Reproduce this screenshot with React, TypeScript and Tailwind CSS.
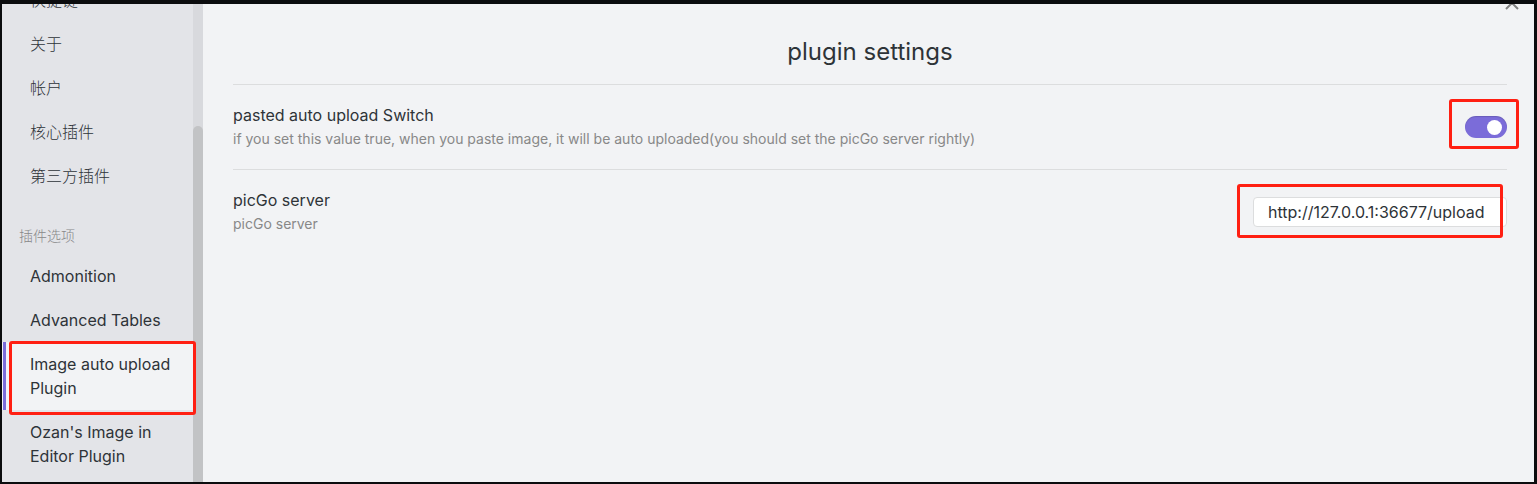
import { useState } from "react";

const coreItems = ["快捷键", "关于", "帐户", "核心插件", "第三方插件"];
const pluginItems = [
  "Admonition",
  "Advanced Tables",
  "Image auto upload Plugin",
  "Ozan's Image in Editor Plugin",
];

function Highlight({ className }: { className: string }) {
  return (
    <span
      aria-hidden="true"
      className={`pointer-events-none absolute z-10 rounded-[3px] border-3 border-[#ff1f12] ${className}`}
    />
  );
}

function NavItem({
  label,
  active,
  onSelect,
}: {
  label: string;
  active: boolean;
  onSelect: () => void;
}) {
  return (
    <li className="relative">
      <button
        type="button"
        onClick={onSelect}
        aria-current={active ? "page" : undefined}
        className={`block w-full py-2.5 pr-4 pl-7 text-left text-base leading-6 ${
          active ? "bg-[#f2f3f5]" : ""
        }`}
      >
        {label}
      </button>
      {active && (
        <>
          <span className="absolute inset-y-0 left-px w-[3px] bg-[#7b6cd9]" />
          <Highlight className="-top-px -right-[3px] -bottom-[5px] left-[7px]" />
        </>
      )}
    </li>
  );
}

export default function App() {
  const [selected, setSelected] = useState("Image auto upload Plugin");
  const [enabled, setEnabled] = useState(true);
  const [server, setServer] = useState("http://127.0.0.1:36677/upload");

  return (
    <div className="relative flex h-screen overflow-hidden border-t-4 border-r-3 border-b-2 border-l-2 border-[#0b0c0e] bg-[#f2f3f5] font-['Inter','Noto_Sans_CJK_SC',sans-serif] text-[#2e3338]">
      <aside className="flex w-[201px] shrink-0 bg-[#e3e4e8]">
        <nav className="-mt-[26px] min-w-0 flex-1">
          <ul className="font-light">
            {coreItems.map((item) => (
              <NavItem
                key={item}
                label={item}
                active={item === selected}
                onSelect={() => setSelected(item)}
              />
            ))}
          </ul>
          <h3 className="pt-7 pr-4 pb-2 pl-[17px] text-sm leading-5 font-light text-[#888888]">
            插件选项
          </h3>
          <ul>
            {pluginItems.map((item) => (
              <NavItem
                key={item}
                label={item}
                active={item === selected}
                onSelect={() => setSelected(item)}
              />
            ))}
          </ul>
        </nav>
        <div className="flex w-2.5 flex-col bg-[#d8d9dd] pt-[122px]">
          <div className="flex-1 rounded-t-full bg-[#c2c3c5]" />
        </div>
      </aside>

      <main className="min-w-0 flex-1 pt-7 pr-[27px] pl-[30px]">
        <h2 className="pb-3 text-center text-2xl leading-10">plugin settings</h2>

        <section className="flex items-center border-t border-[#dcddde] py-[18px]">
          <div className="min-w-0 flex-1">
            <h3 id="switch-name" className="text-base leading-6">
              pasted auto upload Switch
            </h3>
            <p className="text-sm leading-6 text-[#888888]">
              if you set this value true, when you paste image, it will be auto uploaded(you should
              set the picGo server rightly)
            </p>
          </div>
          <div className="relative">
            <button
              type="button"
              role="switch"
              aria-checked={enabled}
              aria-labelledby="switch-name"
              onClick={() => setEnabled(!enabled)}
              className={`flex h-[22px] w-[42px] items-center rounded-full px-[5px] shadow-[inset_0_1px_1px_rgba(0,0,0,0.15)] ${
                enabled ? "justify-end bg-[#7b6cd9]" : "justify-start bg-[#c2c3c5]"
              }`}
            >
              <span className="size-[15px] rounded-full bg-white" />
            </button>
            <Highlight className="-top-[17px] -right-3 -bottom-[11px] -left-4" />
          </div>
        </section>

        <section className="flex items-center border-t border-[#dcddde] py-[18px]">
          <div className="min-w-0 flex-1">
            <label htmlFor="server" className="block text-base leading-6">
              picGo server
            </label>
            <p className="text-sm leading-6 text-[#888888]">picGo server</p>
          </div>
          <div className="relative">
            <input
              id="server"
              type="text"
              value={server}
              onChange={(event) => setServer(event.target.value)}
              className="block h-[30px] w-[254px] rounded border border-[#dcddde] bg-white px-3.5 text-base"
            />
            <Highlight className="-top-[13px] right-1 -bottom-[11px] -left-4" />
          </div>
        </section>
      </main>

      <button
        type="button"
        aria-label="Close"
        className="absolute -top-2 right-[15px] text-[#808080]"
      >
        <svg viewBox="0 0 14 14" className="size-3.5" fill="none" stroke="currentColor" strokeWidth="2">
          <path d="M1 1l12 12M13 1L1 13" />
        </svg>
      </button>
    </div>
  );
}
